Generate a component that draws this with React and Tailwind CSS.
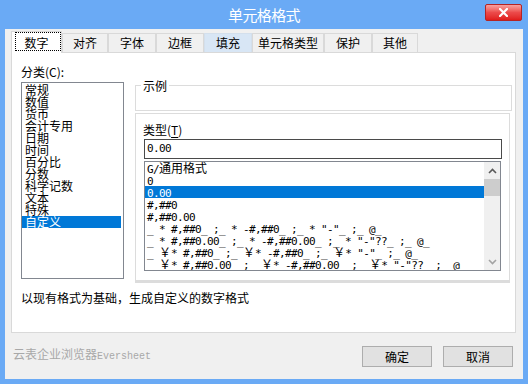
import React from "react";

const leftItems = ["常规", "数值", "货币", "会计专用", "日期", "时间", "百分比", "分数", "科学记数", "文本", "特殊", "自定义"];

const rightItems = [
  "G/通用格式",
  "0",
  "0.00",
  "#,##0",
  "#,##0.00",
  '_ * #,##0_ ;_ * -#,##0_ ;_ * "-"_ ;_ @_',
  '_ * #,##0.00_ ;_ * -#,##0.00_ ;_ * "-"??_ ;_ @_',
  '_ ￥* #,##0_ ;_ ￥* -#,##0_ ;_ ￥* "-"_ ;_ @_',
  '_ ￥* #,##0.00_ ;_ ￥* -#,##0.00_ ;_ ￥* "-"??_ ;_ @_',
];

function MixedText({ text }) {
  const runs = [];
  let cur = "";
  let curAscii = null;
  for (const ch of text) {
    const a = ch.charCodeAt(0) < 128;
    if (curAscii === null || a === curAscii) {
      cur += ch;
      curAscii = a;
    } else {
      runs.push([cur, curAscii]);
      cur = ch;
      curAscii = a;
    }
  }
  if (cur) runs.push([cur, curAscii]);
  return (
    <>
      {runs.map(([t, a], i) =>
        a ? (
          <span key={i} className="font-['DejaVu_Sans_Mono',monospace] text-[11px] tracking-[-0.62px]">
            {t}
          </span>
        ) : (
          <span key={i} className="font-['Noto_Sans_CJK_SC',sans-serif] text-[12px]">
            {t}
          </span>
        )
      )}
    </>
  );
}

const tabs = [
  { label: "数字", w: "w-[51px]", selected: true },
  { label: "对齐", w: "w-[46px]" },
  { label: "字体", w: "w-[48px]" },
  { label: "边框", w: "w-[48px]" },
  { label: "填充", w: "w-[48px]", hover: true },
  { label: "单元格类型", w: "w-[72px]" },
  { label: "保护", w: "w-[48px]" },
  { label: "其他", w: "w-[46px]" },
];

export default function App() {
  return (
    <div className="w-[528px] h-[384px] bg-[#6aaaf5] flex flex-col overflow-hidden font-['Noto_Sans_CJK_SC',sans-serif] text-[12px] leading-[14px] text-black">
      {/* Title bar */}
      <div className="h-[29px] shrink-0 relative flex items-center justify-center">
        <span className="text-white text-[15px] leading-[18px] tracking-[-0.6px]">单元格格式</span>
        <div className="absolute right-[6px] top-[4px] w-[37px] h-[17px] rounded-[2px] border border-[#b42424] bg-gradient-to-b from-[#f7a0a0] via-[#ec4a4a] to-[#e01a1a] flex items-center justify-center">
          <svg width="9" height="9" viewBox="0 0 9 9">
            <path d="M1 1 L8 8 M8 1 L1 8" stroke="white" strokeWidth="2.2" strokeLinecap="square" />
          </svg>
        </div>
      </div>

      {/* Body */}
      <div className="mx-[5px] mb-[5px] flex-1 bg-[#f0f0f0] flex flex-col">
        {/* Tabs */}
        <div className="h-[23px] shrink-0 flex items-end pl-[6px]">
          {tabs.map((t) =>
            t.selected ? (
              <div
                key={t.label}
                className={`${t.w} h-[22px] -mb-px relative z-10 bg-white border border-b-0 border-[#d9d9d9] flex items-center justify-center`}
              >
                <div className="absolute left-[3px] right-0 top-0 bottom-[2px] border border-dotted border-black" />
                <span className="relative">{t.label}</span>
              </div>
            ) : (
              <div
                key={t.label}
                className={`${t.w} h-[19px] border border-b-0 ${
                  t.hover ? "bg-[#d8e6f5] border-[#d3dfec]" : "bg-[#f0f0f0] border-[#d9d9d9]"
                } flex items-center justify-center`}
              >
                {t.label}
              </div>
            )
          )}
        </div>

        {/* Tab panel */}
        <div className="ml-[6px] w-[505px] h-[281px] shrink-0 bg-white border border-[#d9d9d9] pl-[9px] pt-[12px] flex flex-col">
          <div className="flex">
            {/* Left column */}
            <div className="w-[103px] flex flex-col">
              <div className="h-[14px]">分类(C):</div>
              <div className="mt-[3px] h-[197px] border border-[#828790] pt-[1px] flex flex-col">
                {leftItems.map((it, i) =>
                  i === leftItems.length - 1 ? (
                    <div key={it} className="h-[12px] leading-[12px] pl-[3px] mr-[2px] bg-[#0078d7] text-white whitespace-nowrap">
                      {it}
                    </div>
                  ) : (
                    <div key={it} className="h-[12px] leading-[12px] pl-[3px] whitespace-nowrap">
                      {it}
                    </div>
                  )
                )}
              </div>
            </div>

            {/* Right column */}
            <div className="ml-[11px] w-[377px] flex flex-col">
              <div className="mt-[20px] h-[26px] relative border border-[#dcdcdc]">
                <span className="absolute left-[5px] top-[-7px] px-[2px] bg-white leading-[14px]">示例</span>
              </div>
              <div className="mt-[2px] w-[375px] h-[170px] border border-[#dcdcdc] border-b-[3px] pl-[8px] pt-[9px] flex flex-col">
                <div className="h-[14px] -ml-px">
                  类型(<span className="underline underline-offset-[2px]">T</span>)
                </div>
                <div className="mt-[2px] w-[358px] h-[20px] border border-[#4a4a4a] pl-[2px] flex items-center">
                  <span className="font-['DejaVu_Sans_Mono',monospace] text-[11px] tracking-[-0.62px] leading-[12px]">0.00</span>
                </div>
                <div className="mt-[2px] w-[357px] h-[110px] border border-[#828790] flex">
                  <div className="flex-1 min-w-0 overflow-hidden flex flex-col">
                    {rightItems.map((it, i) => (
                      <div
                        key={i}
                        className={`h-[12px] leading-[11px] pl-[2px] whitespace-pre shrink-0 ${
                          i === 2 ? "bg-[#0078d7] text-white" : ""
                        }`}
                      >
                        <MixedText text={it} />
                      </div>
                    ))}
                  </div>
                  <div className="w-[16px] bg-[#f0f0f0] flex flex-col">
                    <div className="h-[17px] flex items-center justify-center">
                      <svg width="9" height="6" viewBox="0 0 9 6">
                        <path d="M1 5 L4.5 1.5 L8 5" fill="none" stroke="#5a5a5a" strokeWidth="1.6" />
                      </svg>
                    </div>
                    <div className="h-[17px] bg-[#cdcdcd]" />
                    <div className="flex-1" />
                    <div className="h-[17px] flex items-center justify-center">
                      <svg width="9" height="6" viewBox="0 0 9 6">
                        <path d="M1 1 L4.5 4.5 L8 1" fill="none" stroke="#a3a3a3" strokeWidth="1.6" />
                      </svg>
                    </div>
                  </div>
                </div>
              </div>
            </div>
          </div>
          <div className="mt-[8px] h-[14px] whitespace-nowrap">以现有格式为基础，生成自定义的数字格式</div>
        </div>

        {/* Footer */}
        <div className="mt-[13px] h-[21px] shrink-0 flex items-center pl-[8px] pr-[10px]">
          <div className="text-[#a8a8a8] whitespace-nowrap mb-[2px]">
            云表企业浏览器<span className="font-['Liberation_Mono',monospace] text-[10px]">Eversheet</span>
          </div>
          <div className="flex-1" />
          <div className="w-[70px] h-[21px] border border-[#adadad] bg-[#e1e1e1] flex items-center justify-center">确定</div>
          <div className="ml-[11px] w-[70px] h-[21px] border border-[#adadad] bg-[#e1e1e1] flex items-center justify-center">取消</div>
        </div>
      </div>
    </div>
  );
}
